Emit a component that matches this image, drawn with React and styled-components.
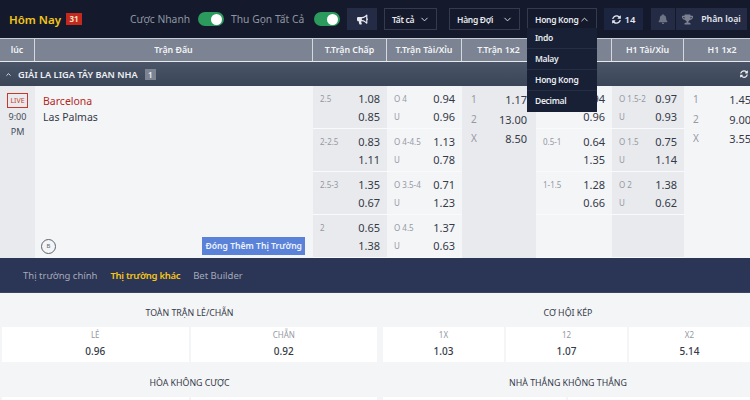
import React from 'react';
import styled, { createGlobalStyle } from 'styled-components';
import { FaBullhorn, FaBell, FaTrophy, FaSyncAlt } from 'react-icons/fa';
import { ChevronDown, ChevronUp } from 'lucide-react';

const columns = [
  { title: 'T.Trận Chấp', shaded: true, rows: [['2.5', '1.08', '0.85'], ['2-2.5', '0.83', '1.11'], ['2.5-3', '1.35', '0.67'], ['2', '0.65', '1.38']] },
  { title: 'T.Trận Tài/Xỉu', rows: [['O 4', '0.94', '0.96', 'U'], ['O 4-4.5', '1.13', '0.78', 'U'], ['O 3.5-4', '0.71', '1.23', 'U'], ['O 4.5', '1.37', '0.63', 'U']] },
  { title: 'T.Trận 1x2', shaded: true, triple: [['1', '1.17'], ['2', '13.00'], ['X', '8.50']] },
  { title: 'H1 Chấp', rows: [['1', '0.94', '0.96'], ['0.5-1', '0.64', '1.35'], ['1-1.5', '1.28', '0.66'], []] },
  { title: 'H1 Tài/Xỉu', shaded: true, rows: [['O 1.5-2', '0.97', '0.93', 'U'], ['O 1.5', '0.75', '1.14', 'U'], ['O 2', '1.38', '0.62', 'U'], []] },
  { title: 'H1 1x2', triple: [['1', '1.45'], ['2', '9.00'], ['X', '3.55']] },
];

const GlobalStyle = createGlobalStyle`
  html, body {
    margin: 0;
    background: #f4f5f7;
    overflow: hidden;
  }
  body {
    font-family: "Noto Sans", "Open Sans", sans-serif;
  }
`;

const Page = styled.div`
  position: relative;
  width: 750px;
  height: 400px;
  overflow: hidden;
`;

const TopBar = styled.header`
  height: 38px;
  background: #141a2b;
  display: flex;
  align-items: center;
  padding-left: 9px;
`;

const Title = styled.div`
  color: #f5c518;
  font-size: 11.5px;
  font-weight: 600;
  width: 57px;
  white-space: nowrap;
`;

const CountBadge = styled.span`
  background: #c5281c;
  color: #f3e3c8;
  font-size: 8px;
  font-weight: 700;
  width: 16px;
  height: 12px;
  line-height: 12px;
  text-align: center;
  margin-right: 48px;
`;

const ToggleLabel = styled.span`
  color: #8f96a3;
  font-size: 10.3px;
  width: ${(p) => p.$width}px;
  margin-right: 8px;
  white-space: nowrap;
`;

const Toggle = styled.span`
  width: 26px;
  height: 14px;
  border-radius: 7px;
  background: #2c9a5c;
  display: flex;
  justify-content: flex-end;
  align-items: center;
  padding-right: 2px;
  box-sizing: border-box;
  margin-right: 7px;

  &::after {
    content: '';
    width: 11px;
    height: 11px;
    border-radius: 50%;
    background: #fff;
  }
`;

const IconButton = styled.span`
  width: 30px;
  height: 22px;
  background: #232b45;
  color: #e6e8ee;
  display: flex;
  align-items: center;
  justify-content: center;
  font-size: 11px;
  margin-right: 7px;
`;

const Select = styled.div`
  width: ${(p) => p.$width}px;
  height: 22px;
  box-sizing: border-box;
  border: 1px solid #343b4f;
  color: #e6e8ee;
  font-size: 8.5px;
  font-weight: 600;
  letter-spacing: -0.3px;
  display: flex;
  align-items: center;
  justify-content: space-between;
  padding: 0 6px 0 7px;
  margin-right: ${(p) => p.$gap}px;
  white-space: nowrap;
`;

const RefreshButton = styled.span`
  width: 39px;
  height: 22px;
  background: #1c2540;
  color: #e6e8ee;
  font-size: 9.5px;
  font-weight: 600;
  display: flex;
  align-items: center;
  justify-content: center;
  gap: 4px;
  margin-right: 8px;
`;

const BellButton = styled.span`
  width: 24px;
  height: 22px;
  background: #232b45;
  color: #6d7486;
  display: flex;
  align-items: center;
  justify-content: center;
  font-size: 10px;
  margin-right: 1px;
`;

const RankButton = styled.span`
  width: 71px;
  height: 22px;
  background: #232b45;
  color: #e6e8ee;
  font-size: 8.8px;
  font-weight: 600;
  display: flex;
  align-items: center;
  justify-content: center;
  gap: 8px;
  white-space: nowrap;

  svg {
    color: #7b8190;
  }
`;

const Menu = styled.ul`
  position: absolute;
  left: 527px;
  top: 28px;
  width: 70px;
  margin: 0;
  padding: 0;
  list-style: none;
  background: #182035;
  z-index: 5;
`;

const MenuItem = styled.li`
  height: 21px;
  box-sizing: border-box;
  line-height: 19px;
  padding-left: 8px;
  color: #e9ebf0;
  font-size: 8.5px;
  font-weight: 600;
  letter-spacing: -0.3px;
  border-bottom: 1px solid #262e45;

  &:last-child {
    border-bottom: 0;
  }
`;

const grid = '35px 278px 74px 75px 74px 76px 72px 76px';

const HeaderRow = styled.div`
  display: grid;
  grid-template-columns: ${grid};
  height: 22px;
  background: #7c8493;
  border-top: 1px solid #c9ced6;
  border-bottom: 1px solid #e8eaee;
`;

const HeaderCell = styled.div`
  color: #f4f5f7;
  font-size: 8.8px;
  font-weight: 600;
  line-height: 22px;
  text-align: center;
  border-right: 1px solid #d5d8de;
  white-space: nowrap;

  &:last-child {
    border-right: 0;
  }
`;

const LeagueRow = styled.div`
  height: 24px;
  background: linear-gradient(#4a5568, #3b4558);
  color: #eef0f3;
  display: flex;
  align-items: center;
  padding-left: 5px;
  font-size: 9.2px;
  font-weight: 600;
`;

const LeagueName = styled.span`
  margin-left: 6px;
`;

const LeagueCount = styled.span`
  background: #7c8493;
  width: 11px;
  height: 11px;
  line-height: 11px;
  text-align: center;
  font-size: 8px;
  margin-left: 7px;
`;

const LeagueRefresh = styled.span`
  margin-left: auto;
  margin-right: 2px;
  display: flex;
`;

const MatchRow = styled.div`
  display: grid;
  grid-template-columns: ${grid};
  height: 172px;
`;

const TimeCell = styled.div`
  background: #e9eaed;
  display: flex;
  flex-direction: column;
  align-items: center;
  padding-top: 7px;
  font-size: 9px;
  color: #444b5a;
  line-height: 15px;
`;

const LiveTag = styled.span`
  border: 1px solid #c8392b;
  color: #c8392b;
  font-size: 7px;
  line-height: 13px;
  height: 13px;
  padding: 0 2px;
  margin-bottom: 1px;
`;

const TeamCell = styled.div`
  position: relative;
  background: #f4f5f7;
  padding: 7px 8px 0;
  font-size: 10.5px;
  line-height: 16px;
`;

const Team = styled.div`
  color: ${(p) => p.$color || '#343a48'};
`;

const StatsMark = styled.span`
  position: absolute;
  left: 6px;
  bottom: 4px;
  width: 13px;
  height: 13px;
  border: 1px solid #5d6370;
  border-radius: 50%;
  font-size: 6px;
  line-height: 13px;
  text-align: center;
  color: #5d6370;
`;

const MoreButton = styled.span`
  position: absolute;
  right: 8px;
  bottom: 3px;
  background: #5a82d8;
  color: #eef2fb;
  font-size: 8.6px;
  font-weight: 600;
  height: 18px;
  line-height: 18px;
  padding: 0 3px;
  white-space: nowrap;
`;

const OddsColumn = styled.div`
  background: ${(p) => (p.$shaded ? '#e9eaed' : '#f4f5f7')};
  display: grid;
  grid-template-rows: ${(p) => (p.$triple ? '1fr' : 'repeat(4, 43px)')};
`;

const OddsBlock = styled.div`
  display: grid;
  grid-template-columns: 1fr auto;
  grid-auto-rows: 18px;
  padding: 4px 7px 0 7px;
  box-sizing: border-box;
  border-bottom: 1px solid #f9fafb;
  font-size: 11px;
  line-height: 18px;
  color: #343a48;
`;

const TripleBlock = styled.div`
  display: grid;
  grid-template-columns: 1fr auto;
  grid-auto-rows: 19.5px;
  padding: 4px 9px 0;
  font-size: 11px;
  line-height: 19px;
  color: #343a48;
  text-align: right;
`;

const Label = styled.span`
  color: #9499a3;
  font-size: 8px;
  text-align: left;
`;

const BigLabel = styled(Label)`
  font-size: 10px;
`;

const Tabs = styled.nav`
  height: 35px;
  background: #2b3556;
  display: flex;
  align-items: center;
  gap: 13px;
  padding: 1px 0 0 23px;
  font-size: 9.5px;
  box-sizing: border-box;
  border-bottom: 1px solid #3a4566;
`;

const Tab = styled.span`
  color: ${(p) => (p.$active ? '#f5c518' : '#a5abb9')};
  font-weight: ${(p) => (p.$active ? 600 : 400)};
  letter-spacing: ${(p) => (p.$active ? '-0.3px' : '0')};
`;

const Markets = styled.section`
  display: grid;
  grid-template-columns: 379px 371px;
  padding-top: 13px;
`;

const Market = styled.div`
  padding: ${(p) => (p.$right ? '0 0 0 4px' : '0 2px')};
  margin-bottom: 14px;
`;

const MarketTitle = styled.div`
  text-align: center;
  color: #343a48;
  font-size: 8.8px;
  line-height: 14px;
  margin-bottom: 7px;
  padding-left: ${(p) => (p.$right ? '3px' : '0')};
`;

const MarketOptions = styled.div`
  display: grid;
  grid-auto-flow: column;
  grid-auto-columns: 1fr;
  gap: 2px;
`;

const Option = styled.div`
  background: #fff;
  height: 35px;
  text-align: center;
  padding-top: 2px;
  box-sizing: border-box;
`;

const OptionLabel = styled.div`
  color: #9499a3;
  font-size: 8px;
  line-height: 12px;
`;

const OptionValue = styled.div`
  color: #343a48;
  font-size: 10px;
  font-weight: 500;
  line-height: 20px;
`;

const markets = [
  { title: 'TOÀN TRẬN LẺ/CHẴN', options: [['LẺ', '0.96'], ['CHẴN', '0.92']] },
  { title: 'CƠ HỘI KÉP', right: true, options: [['1X', '1.03'], ['12', '1.07'], ['X2', '5.14']] },
  { title: 'HÒA KHÔNG CƯỢC', options: [['', ''], ['', '']] },
  { title: 'NHÀ THẮNG KHÔNG THẮNG', right: true, options: [['', ''], ['', '']] },
];

function Odds({ column }) {
  if (column.triple) {
    return (
      <OddsColumn $shaded={column.shaded} $triple>
        <TripleBlock>
          {column.triple.map(([label, value]) => (
            <React.Fragment key={label}>
              <BigLabel>{label}</BigLabel>
              <span>{value}</span>
            </React.Fragment>
          ))}
        </TripleBlock>
      </OddsColumn>
    );
  }
  return (
    <OddsColumn $shaded={column.shaded}>
      {column.rows.map((row, i) => (
        <OddsBlock key={i}>
          <Label>{row[0]}</Label>
          <span>{row[1]}</span>
          <Label>{row[3]}</Label>
          <span>{row[2]}</span>
        </OddsBlock>
      ))}
    </OddsColumn>
  );
}

export default function App() {
  return (
    <Page>
      <GlobalStyle />
      <TopBar>
        <Title>Hôm Nay</Title>
        <CountBadge>31</CountBadge>
        <ToggleLabel $width={60}>Cược Nhanh</ToggleLabel>
        <Toggle />
        <ToggleLabel $width={75}>Thu Gọn Tất Cả</ToggleLabel>
        <Toggle />
        <IconButton><FaBullhorn /></IconButton>
        <Select $width={53} $gap={12}>Tất cả <ChevronDown size={11} /></Select>
        <Select $width={71} $gap={7}>Hàng Đợi <ChevronDown size={11} /></Select>
        <Select $width={70} $gap={7}>Hong Kong <ChevronUp size={11} /></Select>
        <RefreshButton><FaSyncAlt size={9} /> 14</RefreshButton>
        <BellButton><FaBell /></BellButton>
        <RankButton><FaTrophy size={11} /> Phân loại</RankButton>
      </TopBar>
      <Menu>
        <MenuItem>Indo</MenuItem>
        <MenuItem>Malay</MenuItem>
        <MenuItem>Hong Kong</MenuItem>
        <MenuItem>Decimal</MenuItem>
      </Menu>
      <HeaderRow>
        <HeaderCell>lúc</HeaderCell>
        <HeaderCell>Trận Đấu</HeaderCell>
        {columns.map((c) => <HeaderCell key={c.title}>{c.title}</HeaderCell>)}
      </HeaderRow>
      <LeagueRow>
        <ChevronUp size={7} strokeWidth={3} />
        <LeagueName>GIẢI LA LIGA TÂY BAN NHA</LeagueName>
        <LeagueCount>1</LeagueCount>
        <LeagueRefresh><FaSyncAlt size={8} /></LeagueRefresh>
      </LeagueRow>
      <MatchRow>
        <TimeCell>
          <LiveTag>LIVE</LiveTag>
          <span>9:00</span>
          <span>PM</span>
        </TimeCell>
        <TeamCell>
          <Team $color="#b5281c">Barcelona</Team>
          <Team>Las Palmas</Team>
          <StatsMark>B</StatsMark>
          <MoreButton>Đóng Thêm Thị Trường</MoreButton>
        </TeamCell>
        {columns.map((c) => <Odds key={c.title} column={c} />)}
      </MatchRow>
      <Tabs>
        <Tab>Thị trường chính</Tab>
        <Tab $active>Thị trường khác</Tab>
        <Tab>Bet Builder</Tab>
      </Tabs>
      <Markets>
        {markets.map((m) => (
          <Market key={m.title} $right={m.right}>
            <MarketTitle $right={m.right}>{m.title}</MarketTitle>
            <MarketOptions>
              {m.options.map(([label, value], i) => (
                <Option key={i}>
                  <OptionLabel>{label}</OptionLabel>
                  <OptionValue>{value}</OptionValue>
                </Option>
              ))}
            </MarketOptions>
          </Market>
        ))}
      </Markets>
    </Page>
  );
}
